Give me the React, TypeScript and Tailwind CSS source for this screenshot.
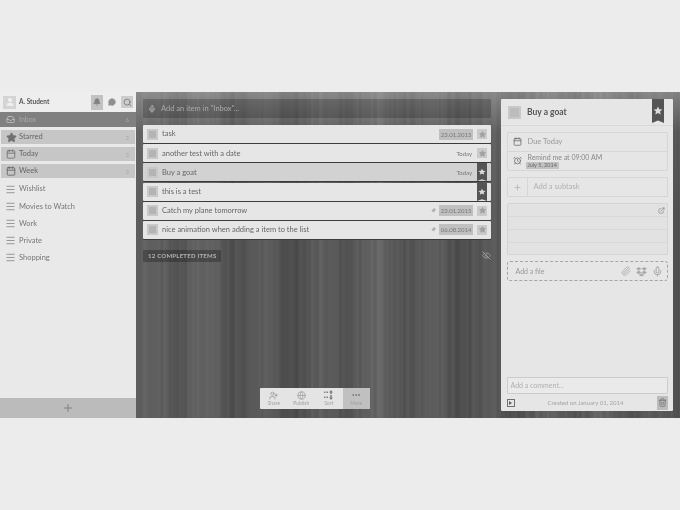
import { Bell, MessageCircle, Search, Star, Calendar, AlarmClock, Plus, ExternalLink, Paperclip, Mic, Trash2, Pin, EyeOff, UserPlus, Globe, MoreHorizontal, Menu, Inbox, User } from 'lucide-react';

const lists = ['Wishlist', 'Movies to Watch', 'Work', 'Private', 'Shopping'];

const smart = [
  { name: 'Starred', count: 2, icon: <Star className="h-[11px] w-[11px] fill-[#707070] text-[#707070]" /> },
  { name: 'Today', count: 3, icon: <Calendar className="h-[10px] w-[10px] text-[#707070]" /> },
  { name: 'Week', count: 3, icon: <Calendar className="h-[10px] w-[10px] text-[#606060]" /> },
];

const tasks = [
  { title: 'task', date: '23.01.2015', overdue: true },
  { title: 'another test with a date', date: 'Today' },
  { title: 'Buy a goat', date: 'Today', starred: true, active: true },
  { title: 'this is a test', starred: true },
  { title: 'Catch my plane tomorrow', date: '23.01.2015', overdue: true, pinned: true },
  { title: 'nice animation when adding a item to the list', date: '06.08.2014', overdue: true, pinned: true },
];

// pseudo random wood grain, same stripes on every load
function woodGrain() {
  const stops: string[] = [];
  let seed = 23;
  for (let x = 0; x < 548; x += 2) {
    seed = (seed * 16807) % 2147483647;
    const band = 88 + 7 * Math.sin(x / 9) + 5 * Math.sin(x / 31);
    const g = Math.round(band + (seed % 15) - 7);
    stops.push(`rgb(${g},${g},${g}) ${x}px`);
  }
  return `linear-gradient(180deg, rgba(255,255,255,0.28), rgba(255,255,255,0.04) 40px, rgba(255,255,255,0) 120px), linear-gradient(90deg, ${stops.join(',')})`;
}

function Bookmark({ large }: { large?: boolean }) {
  return (
    <svg viewBox="0 0 12 24" preserveAspectRatio="none" className={large ? 'h-[24px] w-[12px]' : 'h-[18px] w-[10px]'}>
      <path d="M0 0h12v24l-6-2.5L0 24z" fill="#555" />
      <path d="M6 7.5l1.3 2.8 3 .3-2.3 2 .7 3L6 14l-2.7 1.6.7-3-2.3-2 3-.3z" fill="#ddd" />
    </svg>
  );
}

function TaskRow({ task }: { task: (typeof tasks)[number] }) {
  return (
    <div className={`flex h-[18px] items-center rounded-[1px] pl-[4px] pr-[4px] shadow-[0_1px_0_#3c3c3c] ${task.active ? 'bg-[#d2d2d2]' : 'bg-[#e6e6e6]'}`}>
      <div className="h-[11px] w-[11px] shrink-0 border-2 border-[#c8c8c8] bg-[#b4b4b4]" />
      <span className="ml-[4px] flex-1 text-[7.5px] text-[#666]">{task.title}</span>
      {task.pinned && <Pin className="mr-[3px] h-[5px] w-[5px] rotate-45 fill-[#aaa] text-[#aaa]" />}
      {task.date && (
        <span className={`text-[6px] text-[#777] ${task.overdue ? 'bg-[#c0c0c0] px-[1.5px] py-[1px]' : 'pr-[1px]'}`}>{task.date}</span>
      )}
      <div className="ml-[4px] flex h-[18px] w-[10px] items-start justify-center">
        {task.starred ? (
          <Bookmark />
        ) : (
          <div className="mt-[4px] flex h-[10px] w-[10px] items-center justify-center bg-[#cacaca]">
            <Star className="h-[7px] w-[7px] fill-[#a0a0a0] text-[#a0a0a0]" />
          </div>
        )}
      </div>
    </div>
  );
}

function Sidebar() {
  return (
    <aside className="flex w-[136px] shrink-0 flex-col bg-[#e9e9e9] font-['Lato','sans-serif']">
      <div className="flex h-[20px] items-center bg-[#eeeeee] pl-[3px] pr-[3px]">
        <div className="flex h-[13px] w-[13px] items-center justify-center bg-[#d4d4d4]">
          <User className="h-[10px] w-[10px] fill-[#f2f2f2] text-[#f2f2f2]" />
        </div>
        <span className="ml-[3px] flex-1 text-[6.5px] font-bold text-[#555]">A. Student</span>
        <div className="flex h-[15px] w-[12px] items-center justify-center bg-[#c2c2c2]">
          <Bell className="h-[8px] w-[8px] fill-[#808080] text-[#808080]" />
        </div>
        <MessageCircle className="ml-[5px] h-[8px] w-[8px] fill-[#909090] text-[#909090]" />
        <div className="ml-[5px] flex h-[12px] w-[12px] items-center justify-center bg-[#cccccc]">
          <Search className="h-[9px] w-[9px] text-[#707070]" />
        </div>
      </div>
      <div className="mb-[3px] flex h-[15px] items-center bg-[#808080] pl-[6px] pr-[7px]">
        <Inbox className="h-[9px] w-[9px] text-[#c4c4c4]" />
        <span className="ml-[4px] flex-1 text-[7px] text-[#aaa]">Inbox</span>
        <span className="text-[6px] text-[#aaa]">6</span>
      </div>
      <div className="flex flex-col gap-[3px] pl-[1px] pr-[1px]">
        {smart.map((item) => (
          <div key={item.name} className="flex h-[14px] items-center bg-[#c6c6c6] pl-[4px] pr-[6px]">
            <div className="flex w-[12px] justify-center">{item.icon}</div>
            <span className="ml-[2px] flex-1 text-[7.5px] text-[#666]">{item.name}</span>
            <span className="text-[6px] text-[#aaa]">{item.count}</span>
          </div>
        ))}
      </div>
      <div className="mt-[2.5px] flex flex-1 flex-col">
        {lists.map((name) => (
          <div key={name} className="flex h-[17.2px] items-center pl-[5px]">
            <Menu className="h-[11px] w-[11px] text-[#909090]" />
            <span className="ml-[3px] text-[7.5px] text-[#777]">{name}</span>
          </div>
        ))}
      </div>
      <div className="flex h-[20px] items-center justify-center bg-[#bbbbbb]">
        <Plus className="h-[12px] w-[12px] text-[#808080]" />
      </div>
    </aside>
  );
}

function MainList() {
  return (
    <main className="relative flex flex-1 flex-col pl-[7px] pr-[10px] pt-[7px] font-['Lato','sans-serif']">
      <div className="flex h-[19px] items-center rounded-[1px] bg-[#000000]/20 pl-[5px]">
        <Mic className="h-[8px] w-[8px] text-[#ccc]" />
        <span className="ml-[5px] text-[7.5px] text-[#aaa]">Add an item in "Inbox"...</span>
      </div>
      <div className="mt-[7px] flex flex-col gap-[1.2px]">
        {tasks.map((task) => (
          <TaskRow key={task.title} task={task} />
        ))}
      </div>
      <div className="mt-[11px] flex items-center justify-between">
        <span className="rounded-[1px] bg-[#000000]/25 px-[5px] py-[1.5px] text-[6px] font-bold tracking-[0.25px] text-[#b4b4b4]">12 COMPLETED ITEMS</span>
        <EyeOff className="h-[9px] w-[9px] text-[#aaa]" />
      </div>
      <div className="absolute bottom-[9px] left-[124px] flex h-[21px] w-[110px] rounded-[1px] bg-[#e4e4e4]">
        {[
          { label: 'Share', icon: <UserPlus className="h-[9px] w-[9px] text-[#909090]" /> },
          { label: 'Publish', icon: <Globe className="h-[9px] w-[9px] text-[#a0a0a0]" /> },
          {
            label: 'Sort',
            icon: (
              <svg viewBox="0 0 10 10" className="h-[10px] w-[10px] fill-[#808080]">
                <path d="M0 1.5h1.5V3H0zM2.5 1.5H4V3H2.5zM7 0l2 2.5H7.8V4H6.2V2.5H5zM0 6.5h1.5V8H0zM2.5 6.5H4V8H2.5zM6.2 5h1.6v2.5H9L7 10 5 7.5h1.2z" />
              </svg>
            ),
          },
          { label: 'More', icon: <MoreHorizontal className="h-[10px] w-[10px] text-[#707070]" />, active: true },
        ].map((tool) => (
          <div key={tool.label} className={`flex flex-1 flex-col items-center justify-center ${tool.active ? 'bg-[#c0c0c0]' : ''}`}>
            {tool.icon}
            <span className="text-[5px] leading-[7px] text-[#a0a0a0]">{tool.label}</span>
          </div>
        ))}
      </div>
    </main>
  );
}

function Detail() {
  return (
    <section className="my-[7px] mr-[7px] flex w-[172px] shrink-0 flex-col rounded-[1px] bg-[#e6e6e6] font-['Lato','sans-serif']">
      <div className="relative flex h-[27px] items-center border-b border-[#d8d8d8] pl-[7px]">
        <div className="h-[13px] w-[13px] border-2 border-[#c8c8c8] bg-[#bcbcbc]" />
        <span className="ml-[6px] text-[8.5px] font-bold text-[#555]">Buy a goat</span>
        <div className="absolute right-[9px] top-0 h-[24px] w-[12px]">
          <Bookmark large />
        </div>
      </div>
      <div className="flex flex-1 flex-col px-[5.5px] pt-[6px]">
        <div className="rounded-[1px] border border-[#d6d6d6]">
          <div className="flex h-[18.5px] items-center border-b border-[#d6d6d6] pl-[5px]">
            <Calendar className="h-[9px] w-[9px] text-[#666]" />
            <span className="ml-[6px] text-[7.5px] text-[#999]">Due Today</span>
          </div>
          <div className="flex h-[18.5px] items-center pl-[5px]">
            <AlarmClock className="h-[9px] w-[9px] text-[#666]" />
            <div className="ml-[6px] flex flex-col">
              <span className="text-[7px] leading-[9px] text-[#888]">Remind me at 09:00 AM</span>
              <span className="-ml-[2px] w-fit bg-[#c2c2c2] px-[2px] text-[5.5px] leading-[7px] text-[#666]">July 5, 2014</span>
            </div>
          </div>
        </div>
        <div className="mt-[6px] flex h-[20px] items-center rounded-[1px] border border-[#d6d6d6]">
          <div className="flex h-full w-[20px] items-center justify-center border-r border-[#d6d6d6]">
            <Plus className="h-[9px] w-[9px] text-[#b0b0b0]" />
          </div>
          <span className="ml-[6px] text-[7.5px] text-[#b0b0b0]">Add a subtask</span>
        </div>
        <div className="mt-[6px] flex h-[52px] flex-col rounded-[1px] border border-[#d4d4d4] bg-[#e2e2e2]">
          <div className="flex h-[13px] items-center justify-end border-b border-[#d8d8d8] pr-[2px]">
            <ExternalLink className="h-[7px] w-[7px] text-[#808080]" />
          </div>
          <div className="h-[13px] border-b border-[#d8d8d8]" />
          <div className="h-[13px] border-b border-[#d8d8d8]" />
        </div>
        <div className="mt-[6px] flex h-[20px] items-center rounded-[3px] border border-dashed border-[#a4a4a4] pl-[8px] pr-[4px]">
          <span className="flex-1 text-[7px] text-[#999]">Add a file</span>
          <Paperclip className="h-[10px] w-[10px] text-[#aaa]" />
          <svg viewBox="0 0 12 12" className="ml-[5px] h-[11px] w-[11px] fill-[#aaa]">
            <path d="M3 1L0 3l3 2-3 2 3 2 3-2 3 2 3-2-3-2 3-2-3-2-3 2zM6 3l3 2-3 2-3-2zM3 9.7L6 8l3 1.7L6 11.5z" />
          </svg>
          <Mic className="ml-[5px] h-[11px] w-[11px] text-[#a0a0a0]" />
        </div>
        <div className="mt-auto flex h-[17px] items-center rounded-[1px] border border-[#cccccc] bg-[#eaeaea] pl-[3px] text-[7px] text-[#b0b0b0]">
          Add a comment...
        </div>
        <div className="flex h-[17px] items-center">
          <div className="flex h-[8px] w-[8px] items-center justify-center border border-[#707070]">
            <div className="h-0 w-0 border-y-[2px] border-l-[3px] border-y-transparent border-l-[#606060]" />
          </div>
          <span className="flex-1 text-center text-[6px] text-[#a4a4a4]">Created on January 01, 2014</span>
          <div className="flex h-[14px] w-[11px] items-center justify-center bg-[#bcbcbc]">
            <Trash2 className="h-[9px] w-[9px] text-[#707070]" />
          </div>
        </div>
      </div>
    </section>
  );
}

export default function App() {
  return (
    <div className="h-[510px] w-[680px] overflow-hidden bg-[#ececec] pt-[92px]">
      <div className="flex h-[326px] w-full blur-[0.3px]">
        <Sidebar />
        <div className="flex flex-1" style={{ backgroundImage: woodGrain() }}>
          <MainList />
          <Detail />
        </div>
      </div>
    </div>
  );
}
